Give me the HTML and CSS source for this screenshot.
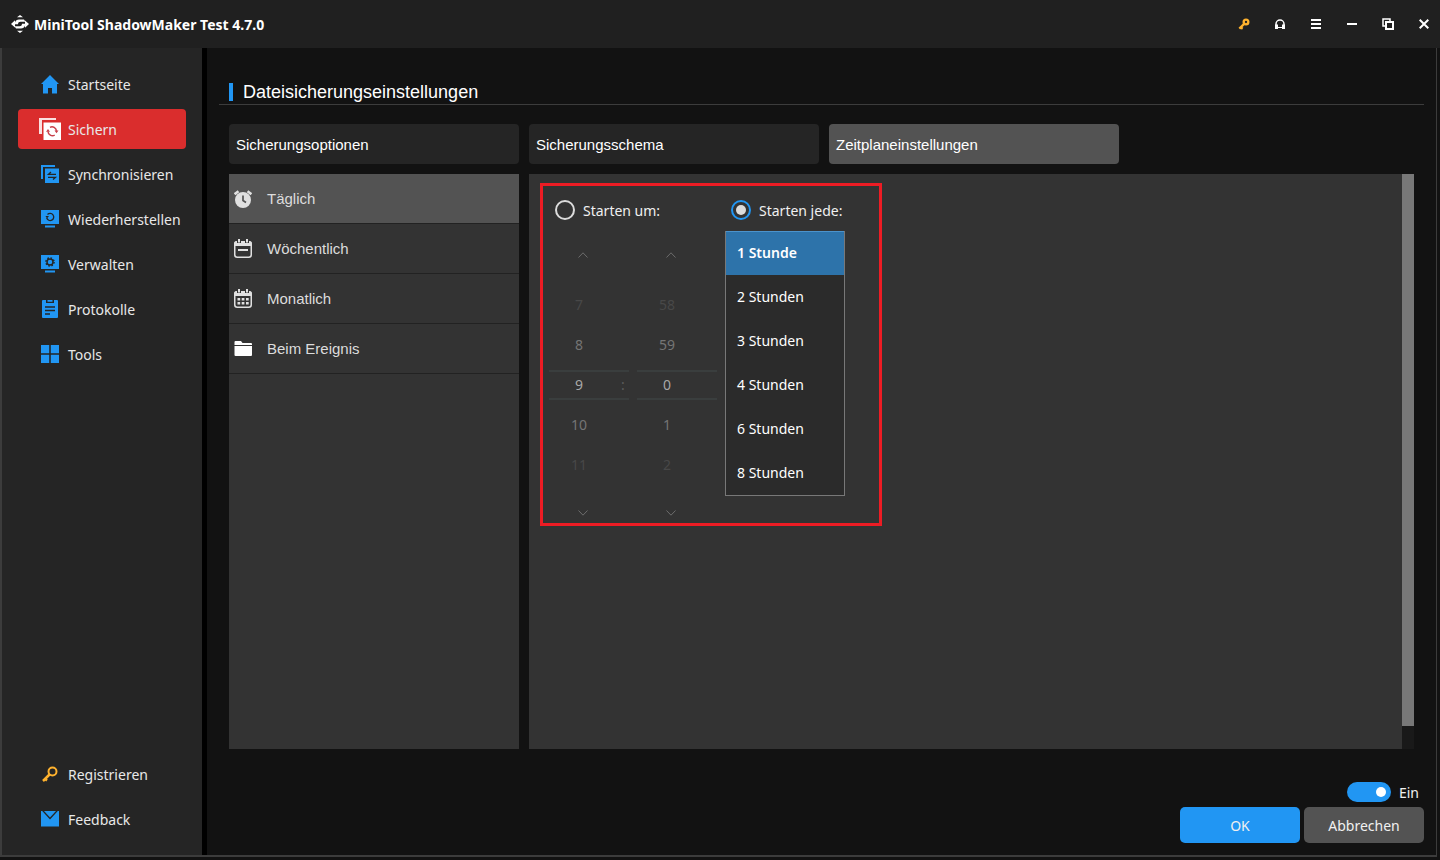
FILE: index.html
```
<!doctype html>
<html lang="de">
  <head>
    <meta charset="utf-8">
    <meta name="viewport" content="width=device-width, initial-scale=1">
    <title>MiniTool ShadowMaker</title>
    <link rel="stylesheet" href="styles.css">
  </head>
  <body>
    <header class="titlebar">
      <svg class="logo" width="18" height="18" viewBox="0 0 18 18" fill="#fff">
        <path d="M6 2.300 9 0l3 2.300zM6 15.700 9 18l3-2.300z"/>
        <path d="M0 9 4 5.200V7.500C4.500 5.500 6 4.500 8 4.500h5l1.500 2.200H9.500C8 6.700 7 7.500 7 9.200H4v3.300z"/>
        <path d="M18 9 14 12.800V10.500C13.500 12.500 12 13.500 10 13.500H5l-1.500-2.200h5C10 11.300 11 10.500 11 8.800h3V5.500z"/>
      </svg>
      <h1>MiniTool ShadowMaker Test 4.7.0</h1>
      <div class="window-buttons">
        <button type="button" aria-label="Registrieren">
          <svg width="12" height="12" viewBox="0 0 18 18" fill="none" stroke="#ffb22e"><circle cx="12" cy="6" r="3.500" stroke-width="3.500"/><path d="M9 9 2 16M4 14l3 2" stroke-width="3.500"/></svg>
        </button>
        <button type="button" aria-label="Support">
          <svg width="12" height="12" viewBox="0 0 12 12" fill="none" stroke="#fff"><path d="M2 8V6a4 4 0 0 1 8 0v2" stroke-width="1.500"/><path d="M2.500 6.500V11M9.500 6.500V11" stroke-width="3"/><path d="M4 9.500h4"/></svg>
        </button>
        <button type="button" aria-label="Menü">
          <svg width="10" height="10" viewBox="0 0 10 10" stroke="#fff" stroke-width="2"><path d="M0 1h10M0 5h10M0 9h10"/></svg>
        </button>
        <button type="button" aria-label="Minimieren">
          <svg width="10" height="10" viewBox="0 0 10 10" fill="#fff"><path d="M0 4h10v2H0z"/></svg>
        </button>
        <button type="button" aria-label="Maximieren">
          <svg width="12" height="12" viewBox="0 0 12 12" fill="none" stroke="#fff"><path d="M4 8H1V1h7v3" stroke-width="1.500"/><path d="M4 4h7v7H4z" stroke-width="2"/></svg>
        </button>
        <button type="button" aria-label="Schließen">
          <svg width="10" height="10" viewBox="0 0 10 10" stroke="#fff" stroke-width="2"><path d="m.7.7 8.600 8.600M9.300.7.7 9.300"/></svg>
        </button>
      </div>
    </header>

    <div class="window">
      <nav class="sidebar">
        <a class="nav-item" href="#start">
          <span class="nav-icon"><svg width="18" height="19" viewBox="0 0 18 19" fill="#2196f3"><path d="M9 0 0 9h2v9.500h5V13h4v5.500h5V9h2z"/></svg></span>
          Startseite
        </a>
        <a class="nav-item active" href="#backup">
          <span class="nav-icon"><svg width="22" height="22" viewBox="0 0 22 22"><path d="M0 0h17v2H3v14H0z" fill="#fff" opacity=".85"/><path d="M4.500 4.500H22V22H4.500z" fill="#fff"/><g fill="none" stroke="#c8404a" stroke-width="1.500"><path d="M11 9.300a4.500 4.500 0 0 1 6.500 3.500M15.700 17.200A4.500 4.500 0 0 1 9 13.500"/></g><path d="m15.500 12.500 4 0-2 2.700zM7 13.700l2-2.700 2 2.700z" fill="#c8404a"/></svg></span>
          Sichern
        </a>
        <a class="nav-item" href="#sync">
          <span class="nav-icon"><svg width="18" height="18" viewBox="0 0 18 18"><path d="M0 0h14v2H2v12H0z" fill="#2196f3"/><path d="M4 3.500h14V18H4z" fill="#2196f3"/><path d="M15 9.300H7.500L10 7M7 12.300h7.500L12 14.600" fill="none" stroke="#252525" stroke-width="1.300"/></svg></span>
          Synchronisieren
        </a>
        <a class="nav-item" href="#restore">
          <span class="nav-icon"><svg width="18" height="18" viewBox="0 0 18 18"><path d="M0 0h18v14H0zM4 15.500h10v2H4z" fill="#2196f3"/><path d="M6.500 4.500a3.600 3.600 0 1 1-.8 3.500" fill="none" stroke="#252525" stroke-width="1.300"/><path d="M4.500 6h3.500L6 8.500z" fill="#252525"/></svg></span>
          Wiederherstellen
        </a>
        <a class="nav-item" href="#manage">
          <span class="nav-icon"><svg width="18" height="18" viewBox="0 0 18 18"><path d="M0 0h18v14H0zM4 15.500h10v2H4z" fill="#2196f3"/><circle cx="9" cy="7" r="3" fill="none" stroke="#252525" stroke-width="1.500"/><circle cx="9" cy="7" r="4.100" fill="none" stroke="#252525" stroke-width="1.400" stroke-dasharray="1.600 1.620"/></svg></span>
          Verwalten
        </a>
        <a class="nav-item" href="#logs">
          <span class="nav-icon"><svg width="16" height="18" viewBox="0 0 16 18"><path d="M1 0h3v3h8V0h3q1 0 1 1v16q0 1-1 1H1q-1 0-1-1V1q0-1 1-1zM5.500 0h5v1.700h-5z" fill="#2196f3"/><path d="M3 7h10M3 10.500h10M3 14h5" stroke="#252525" stroke-width="1.300"/></svg></span>
          Protokolle
        </a>
        <a class="nav-item" href="#tools">
          <span class="nav-icon"><svg width="18" height="18" viewBox="0 0 18 18" fill="#2196f3"><path d="M0 0h8.200v8.200H0zM9.800 0H18v8.200H9.800zM0 9.800h8.200V18H0zM9.800 9.800H18V18H9.800z"/></svg></span>
          Tools
        </a>
        <a class="nav-item nav-bottom" href="#register">
          <span class="nav-icon"><svg width="18" height="18" viewBox="0 0 18 18" fill="none" stroke="#ffb22e"><circle cx="11.500" cy="6.500" r="4" stroke-width="2"/><path d="M8.500 9.500 2 16M4 14l2 1.500" stroke-width="2.500"/></svg></span>
          Registrieren
        </a>
        <a class="nav-item" href="#feedback">
          <span class="nav-icon"><svg width="18" height="16" viewBox="0 0 18 16" fill="#2196f3"><path d="M3 0h12L9 6.500z"/><path d="M0 0h1.200L9 8.500 16.800 0H18v15.500H0z"/></svg></span>
          Feedback
        </a>
      </nav>

      <main class="content">
        <div class="page-title">
          <h2>Dateisicherungseinstellungen</h2>
        </div>

        <div class="tabs" role="tablist">
          <button type="button" class="tab" role="tab">Sicherungsoptionen</button>
          <button type="button" class="tab" role="tab">Sicherungsschema</button>
          <button type="button" class="tab active" role="tab" aria-selected="true">Zeitplaneinstellungen</button>
        </div>

        <div class="panels">
          <div class="modes">
            <button type="button" class="mode active">
              <svg width="18" height="18" viewBox="0 0 18 18"><circle cx="9" cy="10" r="8" fill="#e0e0e0"/><path d="M.6 4.200 4.500 1.200M17.400 4.200 13.500 1.200" stroke="#e0e0e0" stroke-width="2.500"/><path d="M9 5.500V10.500l3 2" fill="none" stroke="#535353" stroke-width="1.700"/></svg>
              Täglich
            </button>
            <button type="button" class="mode">
              <svg width="18" height="19" viewBox="0 0 18 19"><rect x=".75" y="2.750" width="16.500" height="15.500" rx="2.500" fill="none" stroke="#e0e0e0" stroke-width="1.500"/><path d="M3 2h12q3 0 3 3v2H0V5q0-3 3-3zM4 10h10v2H4z" fill="#e0e0e0"/><path d="M5 0v4M13 0v4" stroke="#333" stroke-width="4"/><path d="M5 0v3.500M13 0v3.500" stroke="#e0e0e0" stroke-width="2"/></svg>
              Wöchentlich
            </button>
            <button type="button" class="mode">
              <svg width="18" height="19" viewBox="0 0 18 19"><rect x=".75" y="2.750" width="16.500" height="15.500" rx="2.500" fill="none" stroke="#e0e0e0" stroke-width="1.500"/><path d="M3 2h12q3 0 3 3v2H0V5q0-3 3-3zM3.500 9h2.700v2.500H3.500zM7.700 9h2.700v2.500H7.700zM12 9h2.700v2.500H12zM3.500 13h2.700v2.500H3.500zM7.700 13h2.700v2.500H7.700zM12 13h2.700v2.500H12z" fill="#e0e0e0"/><path d="M5 0v4M13 0v4" stroke="#333" stroke-width="4"/><path d="M5 0v3.500M13 0v3.500" stroke="#e0e0e0" stroke-width="2"/></svg>
              Monatlich
            </button>
            <button type="button" class="mode">
              <svg width="18" height="15" viewBox="0 0 18 15" fill="#fff"><path d="M.5 4V1q0-1 1-1H7l1.500 2H17q1 0 1 1v1z"/><path d="M.5 5H18v9q0 1-1 1H1.500q-1 0-1-1z"/></svg>
              Beim Ereignis
            </button>
          </div>

          <div class="schedule">
            <div class="schedule-body">
              <div class="highlight">
                <div class="start-at">
                  <label class="radio"><input type="radio" name="start"> Starten um:</label>
                  <div class="time">
                    <div class="wheel">
                      <button type="button" class="step" aria-label="Stunde zurück" disabled><svg width="10" height="6" viewBox="0 0 10 6"><path d="M.5 5.500 5 .8l4.500 4.700"/></svg></button>
                      <ul>
                        <li class="far">7</li>
                        <li class="near">8</li>
                        <li class="current"><span>9</span><i>:</i></li>
                        <li class="near">10</li>
                        <li class="far">11</li>
                      </ul>
                      <button type="button" class="step" aria-label="Stunde vor" disabled><svg width="10" height="6" viewBox="0 0 10 6"><path d="M.5.5 5 5.200 9.500.5"/></svg></button>
                    </div>
                    <div class="wheel">
                      <button type="button" class="step" aria-label="Minute zurück" disabled><svg width="10" height="6" viewBox="0 0 10 6"><path d="M.5 5.500 5 .8l4.500 4.700"/></svg></button>
                      <ul>
                        <li class="far">58</li>
                        <li class="near">59</li>
                        <li class="current"><span>0</span></li>
                        <li class="near">1</li>
                        <li class="far">2</li>
                      </ul>
                      <button type="button" class="step" aria-label="Minute vor" disabled><svg width="10" height="6" viewBox="0 0 10 6"><path d="M.5.5 5 5.200 9.500.5"/></svg></button>
                    </div>
                  </div>
                </div>
                <div class="start-every">
                  <label class="radio"><input type="radio" name="start" checked> Starten jede:</label>
                  <select class="interval" size="6" aria-label="Intervall">
                    <option selected>1 Stunde</option>
                    <option>2 Stunden</option>
                    <option>3 Stunden</option>
                    <option>4 Stunden</option>
                    <option>6 Stunden</option>
                    <option>8 Stunden</option>
                  </select>
                </div>
              </div>
            </div>
            <div class="scrollbar"><div class="thumb"></div></div>
          </div>
        </div>

        <footer class="footer">
          <label class="switch"><input type="checkbox" role="switch" checked> Ein</label>
          <div class="actions">
            <button type="button" class="btn primary">OK</button>
            <button type="button" class="btn">Abbrechen</button>
          </div>
        </footer>
      </main>
    </div>
  </body>
</html>
```
FILE: styles.css
```
* {
  box-sizing: border-box;
}
body {
  margin: 0;
  min-height: 100vh;
  display: flex;
  flex-direction: column;
  background: #121212;
  color: #f0f0f0;
  font-family: "Noto Sans", "Open Sans", sans-serif;
  font-size: 14px;
  line-height: 20px;
}
button {
  margin: 0;
  padding: 0;
  border: none;
  background: none;
  color: inherit;
  font: inherit;
  cursor: pointer;
}

/* title bar */
.titlebar {
  display: flex;
  align-items: center;
  gap: 5px;
  height: 48px;
  padding-left: 11px;
  background: #202020;
}
.titlebar h1 {
  margin: 0;
  padding-top: 2px;
  font-size: 14px;
  font-weight: 700;
  color: #fff;
}
.window-buttons {
  display: flex;
  gap: 4px;
  margin-left: auto;
}
.window-buttons button {
  display: flex;
  align-items: center;
  justify-content: center;
  width: 32px;
  height: 48px;
}

.window {
  flex: 1;
  display: flex;
  margin: 0 3px 3px 0;
  border: solid #3c3c3c;
  border-width: 0 1px 2px 2px;
}

/* sidebar */
.sidebar {
  display: flex;
  flex-direction: column;
  gap: 5px;
  flex: 0 0 205px;
  padding: 16px;
  background: #252525;
  border-right: 5px solid #000;
}
.nav-item {
  display: flex;
  align-items: center;
  gap: 7px;
  height: 40px;
  padding: 2px 0 0 21px;
  border-radius: 4px;
  color: #e8e8e8;
  text-decoration: none;
}
.nav-item.active {
  background: #da2d2d;
}
.nav-icon {
  display: flex;
  justify-content: center;
  width: 22px;
  padding-bottom: 2px;
}
.nav-bottom {
  margin-top: auto;
}

/* main area */
.content {
  flex: 1;
  display: flex;
  flex-direction: column;
  padding: 32px 12px 12px;
}
.page-title {
  padding: 0 10px 3px;
  border-bottom: 1px solid #3c3c3c;
}
.page-title h2 {
  margin: 3px 0 0;
  padding-left: 10px;
  border-left: 4px solid #2196f3;
  font: 18px/18px "Liberation Sans", Arial, sans-serif;
  color: #fff;
}
.tabs {
  display: flex;
  gap: 10px;
  margin: 19px 10px 10px;
}
.tab {
  width: 290px;
  height: 40px;
  padding: 0 7px;
  border-radius: 4px;
  background: #252525;
  color: #fff;
  font: 15px "Liberation Sans", Arial, sans-serif;
  text-align: left;
}
.tab.active {
  background: #535353;
}
.panels {
  flex: 1;
  display: flex;
  gap: 10px;
  margin: 0 10px 33px;
}
.modes {
  flex: 0 0 290px;
  background: #333;
}
.mode {
  display: flex;
  align-items: center;
  gap: 15px;
  width: 100%;
  height: 50px;
  padding-left: 5px;
  border-bottom: 1px solid #222;
  color: #dcdcdc;
  font: 15px "Liberation Sans", Arial, sans-serif;
}
.mode.active {
  background: #535353;
}

/* schedule panel */
.schedule {
  flex: 1;
  display: flex;
  background: #333;
}
.schedule-body {
  flex: 1;
  padding: 9px 11px;
}
.scrollbar {
  width: 12px;
  background: #191919;
}
.thumb {
  height: 96%;
  background: #787878;
}
.highlight {
  display: inline-flex;
  gap: 8px;
  padding: 3px 34px 0 6px;
  border: 3px solid #ed1c24;
}
.radio {
  display: flex;
  align-items: center;
  gap: 8px;
  height: 42px;
  padding: 2px 0 0 6px;
}
.radio input {
  appearance: none;
  width: 20px;
  height: 20px;
  margin: 0 0 2px;
  border: 2px solid #dcdcdc;
  border-radius: 50%;
}
.radio input:checked {
  padding: 3px;
  border-color: #2196f3;
  background: #dcdcdc content-box;
}
.time {
  display: flex;
  gap: 8px;
}
.wheel {
  width: 80px;
}
.step {
  display: flex;
  align-items: center;
  justify-content: center;
  width: 68px;
  height: 20px;
  cursor: default;
}
.step:first-child {
  margin-top: 14px;
}
.step path {
  fill: none;
  stroke: #6c6c6c;
}
.wheel ul {
  margin: 20px 0 18px;
  padding: 0;
  list-style: none;
}
.wheel li {
  height: 40px;
  padding-right: 20px;
  line-height: 40px;
  text-align: center;
}
.wheel .far {
  color: #484848;
}
.wheel .near {
  color: #757575;
}
.wheel .current {
  display: flex;
  height: 30px;
  margin: 5px 0;
  padding: 0;
  border: solid #3a3e3e;
  border-width: 2px 0;
  line-height: 26px;
  color: #a8a8a8;
}
.current span {
  flex: 0 0 60px;
}
.current i {
  flex: 0 0 28px;
  color: #5c5c5c;
  font-style: normal;
}
.interval {
  display: block;
  width: 120px;
  padding: 0;
  border: 1px solid #787878;
  border-top: none;
  border-radius: 0;
  outline: none;
  background: #2b2b2b;
  color: #fff;
  font: inherit;
  overflow: hidden;
}
.interval option {
  min-height: 44px;
  padding: 12px 11px;
  line-height: 20px;
}
.interval option:checked {
  background: #2d73aa linear-gradient(#2d73aa, #2d73aa);
  box-shadow: inset 0 1px #4b93cc;
  color: #fff;
  font-weight: 600;
}

/* footer */
.footer {
  display: flex;
  flex-direction: column;
  align-items: flex-end;
  gap: 5px;
}
.switch {
  display: flex;
  align-items: center;
  gap: 8px;
  height: 20px;
  padding: 2px 5px 0 0;
}
.switch input {
  appearance: none;
  width: 44px;
  height: 20px;
  margin: 0 0 2px;
  border-radius: 10px;
  background: #2196f3;
}
.switch input::before {
  content: "";
  display: block;
  width: 10px;
  height: 10px;
  margin: 5px 0 0 5px;
  border-radius: 50%;
  background: #fff;
}
.switch input:checked::before {
  margin-left: 29px;
}
.actions {
  display: flex;
  gap: 4px;
}
.btn {
  width: 120px;
  height: 36px;
  padding-top: 2px;
  border-radius: 5px;
  background: #535353;
}
.btn.primary {
  background: #2196f3;
}
```
